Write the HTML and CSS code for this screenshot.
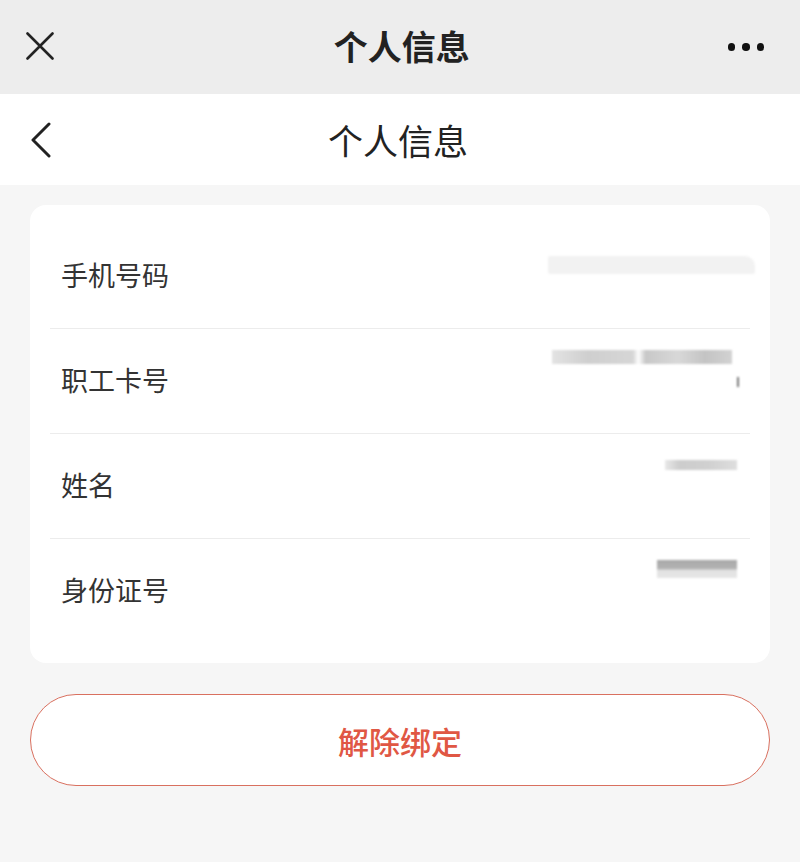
FILE: index.html
```html
<!DOCTYPE html>
<html lang="zh-CN">
<head>
<meta charset="utf-8">
<title>个人信息</title>
<link rel="stylesheet" href="styles.css">
</head>
<body>
<header class="topbar">
  <span class="icon close">
    <svg width="28" height="28" viewBox="0 0 28 28"><path d="M1.5 1.5 L26.5 26.5 M26.5 1.5 L1.5 26.5" stroke="#222" stroke-width="2.6" stroke-linecap="round" fill="none"/></svg>
  </span>
  <h1 class="top-title">个人信息</h1>
  <span class="icon more"><i></i><i></i><i></i></span>
</header>
<nav class="navbar">
  <span class="icon back">
    <svg width="22" height="36" viewBox="0 0 22 36"><path d="M19 2 L3 18 L19 34" stroke="#222" stroke-width="3" stroke-linecap="round" stroke-linejoin="round" fill="none"/></svg>
  </span>
  <h2 class="nav-title">个人信息</h2>
</nav>
<main class="content">
  <section class="card">
    <div class="row">
      <span class="label">手机号码</span>
      <span class="value v1"><b class="blob b1a"></b></span>
    </div>
    <div class="row">
      <span class="label">职工卡号</span>
      <span class="value v2"><b class="blob b2a"></b><b class="blob b2b"></b></span>
    </div>
    <div class="row">
      <span class="label">姓名</span>
      <span class="value v3"><b class="blob b3a"></b></span>
    </div>
    <div class="row">
      <span class="label">身份证号</span>
      <span class="value v4"><b class="blob b4a"></b></span>
    </div>
  </section>
  <button class="unbind">解除绑定</button>
</main>
</body>
</html>
```

FILE: styles.css
```css
* { box-sizing: border-box; }
html, body { margin: 0; padding: 0; }
body {
  background: #f6f6f6;
  min-height: 862px;
  font-family: "Noto Sans CJK SC", "Noto Sans", sans-serif;
  color: #222;
}
.topbar {
  height: 94px;
  background: #ededed;
  display: flex;
  align-items: center;
  justify-content: space-between;
  padding: 0 36px 0 26px;
}
.icon { display: flex; align-items: center; }
.close { width: 28px; height: 28px; margin-top: -2px; }
.top-title {
  margin: 0;
  font-size: 34px;
  font-weight: 700;
  line-height: 1;
  margin-left: 22px;
  margin-top: -2px;
}
.more { gap: 7px; }
.more i {
  width: 7.5px;
  height: 7.5px;
  border-radius: 50%;
  background: #111;
  display: block;
}
.navbar {
  height: 91px;
  background: #fff;
  display: flex;
  align-items: center;
  padding-left: 30px;
}
.back { width: 22px; height: 36px; margin-top: 1px; }
.nav-title {
  margin: 0 0 0 276px;
  font-size: 35px;
  font-weight: 400;
  line-height: 1;
  color: #222;
}
.content { padding: 20px 30px 0; }
.card {
  background: #fff;
  border-radius: 16px;
  padding: 19px 20px;
}
.row {
  height: 105px;
  display: flex;
  align-items: center;
  justify-content: space-between;
  padding: 0 10px 0 11px;
  border-bottom: 1px solid #ececec;
}
.row:last-child { border-bottom: none; }
.label {
  font-size: 27px;
  color: #333;
  line-height: 1;
  margin-top: -4px;
}
.value {
  position: relative;
  display: block;
  height: 40px;
  width: 220px;
}
.blob {
  position: absolute;
  display: block;
  filter: blur(1.2px);
}
.b1a {
  right: -15px; top: 0px; width: 207px; height: 18px;
  background: #f2f2f2;
  border-radius: 2px 10px 2px 2px;
}
.b2a {
  right: 8px; top: -11px; width: 180px; height: 14px;
  background: linear-gradient(90deg, #e3e3e3 0%, #cfcfcf 20%, #d6d6d6 45%, #fff 48%, #c8c8c8 52%, #d8d8d8 70%, #c4c4c4 85%, #d2d2d2 100%);
}
.b2b {
  right: 1px; top: 16px; width: 2px; height: 10px;
  background: #777;
}
.b3a {
  right: 3px; top: -6px; width: 72px; height: 10px;
  background: linear-gradient(90deg, #e8e8e8 0%, #cdcdcd 20%, #d0d0d0 60%, #dedede 100%);
}
.b4a {
  right: 3px; top: -12px; width: 80px; height: 18px;
  background: linear-gradient(180deg, #a8a8a8 0%, #b4b4b4 50%, #e2e2e2 55%, #e6e6e6 100%);
}
.unbind {
  display: flex;
  align-items: center;
  justify-content: center;
  width: 100%;
  height: 92px;
  margin-top: 31px;
  background: #fff;
  border: 1.5px solid #d9705f;
  border-radius: 46px;
  font-family: "Noto Sans CJK SC", "Noto Sans", sans-serif;
  font-size: 31px;
  font-weight: 500;
  color: #e05744;
  padding: 0;
  line-height: 1;
}
```
